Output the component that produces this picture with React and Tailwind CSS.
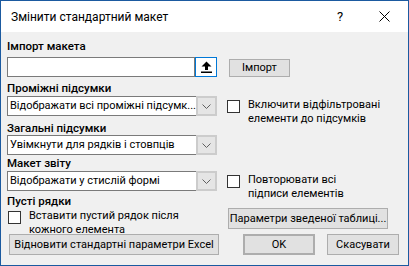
const font = { fontFamily: 'Roboto, "Noto Sans", sans-serif' };

const Chevron = () => (
    <svg width="9" height="5" viewBox="0 0 9 5" fill="none">
        <path d="M0.5 0.5 L4.5 4.5 L8.5 0.5" stroke="#606060" strokeWidth="1" />
    </svg>
);

const Select = ({ value }) => (
    <div className="flex h-[20px] w-[210px] shrink-0 items-stretch border border-[#7a7a7a] bg-white">
        <div className="flex-1 overflow-hidden whitespace-nowrap pl-[2px] leading-[18px]">{value}</div>
        <div className="-my-px -mr-px flex w-[21px] items-center justify-center border-2 border-[#cccccc] bg-[#e5e5e5]">
            <Chevron />
        </div>
    </div>
);

const Checkbox = () => (
    <div className="h-[13px] w-[13px] shrink-0 border border-[#333333] bg-white" />
);

const Label = ({ children, className }) => (
    <div className={`shrink-0 text-[11.5px] font-medium leading-[14px] ${className}`}>{children}</div>
);

const Button = ({ children, className }) => (
    <div className={`flex shrink-0 items-center justify-center whitespace-nowrap border border-[#adadad] bg-[#e1e1e1] leading-[14px] ${className}`}>
        {children}
    </div>
);

const CheckOption = ({ lines, className }) => (
    <div className={`flex items-start gap-[8px] ${className}`}>
        <Checkbox />
        <div className="-mt-[2px] whitespace-nowrap leading-[14px]">
            {lines[0]}
            <br />
            {lines[1]}
        </div>
    </div>
);

const App = () => {
    return (
        <div
            className="flex h-[266px] w-[409px] flex-col border border-[#1b5aa0] text-[11px] text-black"
            style={font}
        >
            <div className="flex h-[31px] shrink-0 items-center bg-white pl-[10px] text-[12px]">
                <span className="flex-1">Змінити стандартний макет</span>
                <span className="w-[20px] text-[13px]">?</span>
                <svg width="11" height="11" viewBox="0 0 11 11" className="ml-[22px] mr-[18px]">
                    <path d="M0.5 0.5 L10.5 10.5 M10.5 0.5 L0.5 10.5" stroke="#000" strokeWidth="1" />
                </svg>
            </div>

            <div className="flex flex-1 flex-col bg-[#f0f0f0] pl-[6px]">
                <Label className="h-[25px] pt-[7px]">Імпорт макета</Label>

                <div className="flex h-[20px] shrink-0 items-start">
                    <div className="flex h-[20px] w-[210px]">
                        <div className="flex-1 border border-[#7a7a7a] bg-white" />
                        <div className="flex w-[22px] items-center justify-center border border-[#0078d7] bg-white">
                            <svg width="11" height="12" viewBox="0 0 11 12">
                                <path d="M5.5 0.5 L10.5 5.5 L7 5.5 L7 9 L4 9 L4 5.5 L0.5 5.5 Z" fill="#000" />
                                <rect x="0" y="10.5" width="11" height="1.5" fill="#000" />
                            </svg>
                        </div>
                    </div>
                    <Button className="ml-[12px] mt-[2px] h-[18px] w-[61px]">Імпорт</Button>
                </div>

                <Label className="h-[19px] pt-[4px]">Проміжні підсумки</Label>

                <div className="flex h-[20px] shrink-0 items-start">
                    <Select value="Відображати всі проміжні підсумк..." />
                    <CheckOption
                        className="ml-[10px] pt-[4px]"
                        lines={['Включити відфільтровані', 'елементи до підсумків']}
                    />
                </div>

                <Label className="h-[19px] pt-[5px]">Загальні підсумки</Label>

                <Select value="Увімкнути для рядків і стовпців" />

                <Label className="h-[16px] pt-[1px]">Макет звіту</Label>

                <div className="flex h-[20px] shrink-0 items-start">
                    <Select value="Відображати у стислій формі" />
                    <CheckOption
                        className="ml-[10px] pt-[4px]"
                        lines={['Повторювати всі', 'підписи елементів']}
                    />
                </div>

                <Label className="h-[17px] pt-[3px]">Пусті рядки</Label>

                <div className="flex h-[26px] shrink-0 items-start">
                    <div className="w-[221px] pl-[1px] pt-[3px]">
                        <CheckOption lines={['Вставити пустий рядок після', 'кожного елемента']} />
                    </div>
                    <Button className="h-[21px] w-[160px]">Параметри зведеної таблиці...</Button>
                </div>

                <div className="flex h-[22px] shrink-0 items-start">
                    <Button className="ml-[2px] h-[21px] w-[210px]">Відновити стандартні параметри Excel</Button>
                    <Button className="ml-[24px] h-[21px] w-[72px] border-2 border-[#0078d7]">OK</Button>
                    <Button className="ml-[12px] h-[21px] w-[72px]">Скасувати</Button>
                </div>
            </div>
        </div>
    );
};

export default App;
